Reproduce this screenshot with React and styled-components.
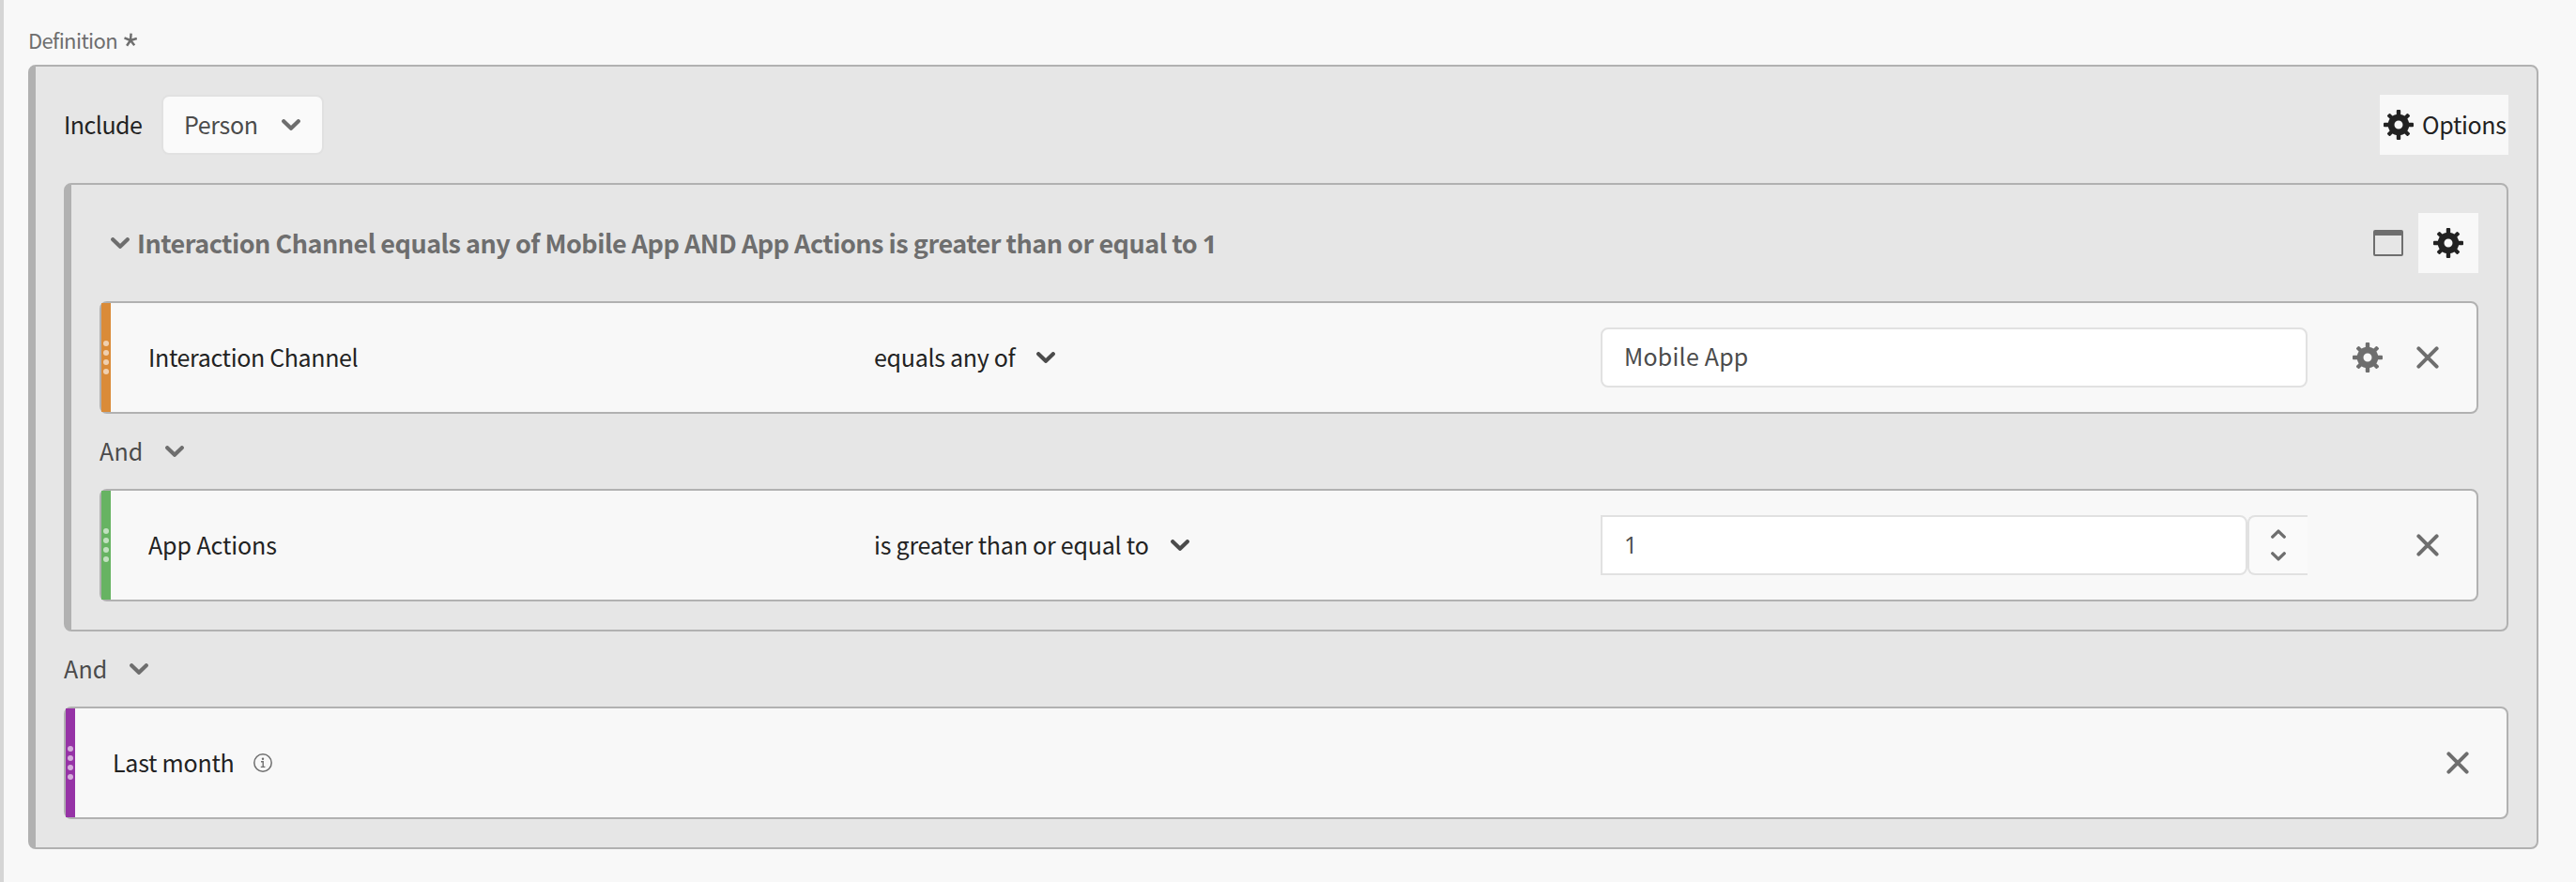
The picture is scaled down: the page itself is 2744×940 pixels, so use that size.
import React from "react";
import styled, { createGlobalStyle } from "styled-components";

const GlobalStyle = createGlobalStyle`
  * { box-sizing: border-box; }
  body {
    margin: 0;
    background: #f8f8f8;
    font-family: "Noto Sans CJK SC", "Open Sans", sans-serif;
  }
  svg { display: block; flex: none; }
`;

const Page = styled.main`
  height: 940px;
  border-left: 4px solid #d5d5d5;
  padding: 18px 40px 0 26px;
`;

const FieldLabel = styled.div`
  display: flex;
  align-items: center;
  gap: 7px;
  height: 51px;
  padding: 0 0 3px 0;
  color: #6e6e6e;
  font-size: 22px;
  line-height: 48px;
  letter-spacing: -0.6px;
`;

const Container = styled.section`
  border: 2px solid #b1b1b1;
  border-left-width: 8px;
  border-radius: 8px;
  background: #e6e6e6;
  padding: 30px;
`;

const OuterContainer = styled(Container)`
  height: 836px;
`;

const ContainerHeader = styled.header`
  display: flex;
  align-items: center;
  height: 64px;
  margin-bottom: 30px;
`;

const Text = styled.span`
  color: ${(p) => p.$color || "#222222"};
  font-size: 25px;
  line-height: 34px;
  padding-bottom: 2px;
  letter-spacing: ${(p) => p.$tracking ?? -0.35}px;
  white-space: nowrap;
`;

const IncludeLabel = styled(Text)`
  width: 104px;
`;

const Picker = styled.button`
  display: flex;
  align-items: center;
  justify-content: space-between;
  width: 173px;
  height: 64px;
  padding: 0 23px 0 22px;
  border: 2px solid #e1e1e1;
  border-radius: 8px;
  background: #fafafa;
  font-family: inherit;
`;

const OptionsButton = styled.button`
  display: flex;
  align-items: center;
  gap: 9px;
  width: 137px;
  height: 64px;
  margin-left: auto;
  padding: 0 0 0 4px;
  border: 0;
  background: #f8f8f8;
  font-family: inherit;
`;

const InnerContainer = styled(Container)`
  height: 478px;
`;

const InnerHeader = styled(ContainerHeader)`
  padding-left: 12px;
`;

const Title = styled.h2`
  margin: 0 auto 0 8px;
  color: #6e6e6e;
  font-size: 27px;
  font-weight: 700;
  line-height: 38px;
  letter-spacing: -0.5px;
  white-space: nowrap;
`;

const Digit = styled.span`
  font-family: "Open Sans", sans-serif;
`;

const SquareButton = styled.button`
  display: grid;
  place-items: center;
  width: 64px;
  height: 64px;
  margin-left: 16px;
  padding: 0;
  border: 0;
  background: #f8f8f8;
`;

const Rule = styled.article`
  display: flex;
  align-items: center;
  height: 120px;
  padding-right: 20px;
  border: 2px solid #b1b1b1;
  border-radius: 8px;
  background: #f8f8f8;
`;

const Handle = styled.div`
  display: flex;
  flex-direction: column;
  align-items: center;
  justify-content: center;
  gap: 4px;
  align-self: stretch;
  width: 10px;
  background: ${(p) => p.$color};
`;

const Dot = styled.i`
  width: 6px;
  height: 6px;
  border-radius: 50%;
  background: rgba(255, 255, 255, 0.6);
`;

const RuleColumns = styled.div`
  display: grid;
  grid-template-columns: 773px 774px 753px;
  align-items: center;
  margin-left: 40px;
`;

const Operator = styled.div`
  display: flex;
  align-items: center;
  gap: 23px;
`;

const Summary = styled.div`
  display: flex;
  align-items: center;
  gap: 21px;
  margin-left: 40px;
`;

const Actions = styled.div`
  display: flex;
  margin-left: auto;
`;

const IconCell = styled.div`
  display: grid;
  place-items: center;
  width: 64px;
  height: 64px;
`;

const Field = styled.div`
  display: flex;
  align-items: center;
  flex: 1;
  height: 64px;
  padding: 0 0 2px 23px;
  border: 2px solid #e1e1e1;
  border-radius: ${(p) => (p.$numeric ? "0 8px 8px 0" : "8px")};
  background: #ffffff;
`;

const NumberField = styled.div`
  display: flex;
`;

const Stepper = styled.div`
  display: flex;
  flex-direction: column;
  align-items: center;
  justify-content: center;
  gap: 14px;
  width: 64px;
  height: 64px;
  border: 2px solid #e1e1e1;
  border-right: 0;
  border-radius: 8px 0 0 8px;
  background: #fafafa;
`;

const Connector = styled.div`
  display: flex;
  align-items: center;
  height: 80px;
`;

const ConnectorLabel = styled(Text)`
  width: 70px;
`;

const Chevron = ({ color = "#6e6e6e" }) => (
  <svg width="20" height="12" viewBox="0 0 20 12" fill="none" stroke={color} strokeWidth="4.2" strokeLinecap="round" strokeLinejoin="round">
    <path d="M2.2 2.2 10 9.8l7.8-7.6" />
  </svg>
);

const StepArrow = ({ up }) => (
  <svg width="16" height="10" viewBox="0 0 16 10" fill="none" stroke="#6e6e6e" strokeWidth="3.4" strokeLinecap="round" strokeLinejoin="round">
    <path d={up ? "M1.8 8.1 8 2.1l6.2 6" : "M1.8 1.9 8 7.9l6.2-6"} />
  </svg>
);

const Cross = () => (
  <svg width="24" height="24" viewBox="0 0 24 24" stroke="#6e6e6e" strokeWidth="4" strokeLinecap="round">
    <path d="M2.4 2.4l19.2 19.2M21.6 2.4 2.4 21.6" />
  </svg>
);

const Gear = ({ color = "#222222" }) => (
  <svg width="32" height="32" viewBox="-16 -16 32 32" fill={color}>
    {[0, 90, 180, 270].map((a) => (
      <rect key={a} x="-2.2" y="-16" width="4.4" height="7" rx="1" transform={`rotate(${a})`} />
    ))}
    {[45, 135, 225, 315].map((a) => (
      <rect key={a} x="-2.1" y="-15.5" width="4.2" height="7" rx="1" transform={`rotate(${a})`} />
    ))}
    <circle r="7.9" fill="none" stroke={color} strokeWidth="6.8" />
  </svg>
);

const WindowIcon = () => (
  <svg width="32" height="28" viewBox="0 0 32 28">
    <rect x="1" y="1" width="30" height="26" rx="1" fill="none" stroke="#6e6e6e" strokeWidth="2" />
    <path d="M1 1h30v5H1z" fill="#6e6e6e" />
  </svg>
);

const InfoIcon = () => (
  <svg width="20" height="20" viewBox="0 0 20 20" fill="none" stroke="#6e6e6e">
    <circle cx="10" cy="10" r="9.2" strokeWidth="1.5" />
    <circle cx="10" cy="5.8" r="1.2" fill="#6e6e6e" stroke="none" />
    <path d="M8 8.7h2.2v5.6M7.8 14.4h4.6" strokeWidth="1.4" />
  </svg>
);

const RequiredIcon = () => (
  <svg width="14" height="15" viewBox="0 0 14 15" stroke="#6e6e6e" strokeWidth="2.5">
    <path d="M7 8 7.6.6M7 8 .5 5.4M7 8l6.8-2M7 8l-3.9 5.7M7 8l4.2 5.3" />
  </svg>
);

const DragHandle = ({ color }) => (
  <Handle $color={color}>
    <Dot /><Dot /><Dot /><Dot />
  </Handle>
);

const And = () => (
  <Connector>
    <ConnectorLabel $color="#4b4b4b" $tracking={0.2}>And</ConnectorLabel>
    <Chevron />
  </Connector>
);

export default function App() {
  return (
    <>
      <GlobalStyle />
      <Page>
        <FieldLabel>
          Definition
          <RequiredIcon />
        </FieldLabel>
        <OuterContainer>
          <ContainerHeader>
            <IncludeLabel $tracking={-0.5}>Include</IncludeLabel>
            <Picker>
              <Text $color="#4b4b4b">Person</Text>
              <Chevron />
            </Picker>
            <OptionsButton>
              <Gear />
              <Text>Options</Text>
            </OptionsButton>
          </ContainerHeader>

          <InnerContainer>
            <InnerHeader>
              <Chevron />
              <Title>
                Interaction Channel equals any of Mobile App AND App Actions is greater than or equal to <Digit>1</Digit>
              </Title>
              <WindowIcon />
              <SquareButton><Gear /></SquareButton>
            </InnerHeader>

            <Rule>
              <DragHandle color="#da8b38" />
              <RuleColumns>
                <Text>Interaction Channel</Text>
                <Operator>
                  <Text $tracking={-0.3}>equals any of</Text>
                  <Chevron color="#4b4b4b" />
                </Operator>
                <Field>
                  <Text $color="#4b4b4b" $tracking={0.2}>Mobile App</Text>
                </Field>
              </RuleColumns>
              <Actions>
                <IconCell><Gear color="#6e6e6e" /></IconCell>
                <IconCell><Cross /></IconCell>
              </Actions>
            </Rule>

            <And />

            <Rule>
              <DragHandle color="#67b362" />
              <RuleColumns>
                <Text $tracking={-0.1}>App Actions</Text>
                <Operator>
                  <Text $tracking={-0.22}>is greater than or equal to</Text>
                  <Chevron color="#4b4b4b" />
                </Operator>
                <NumberField>
                  <Field $numeric>
                    <Text $color="#4b4b4b"><Digit>1</Digit></Text>
                  </Field>
                  <Stepper>
                    <StepArrow up />
                    <StepArrow />
                  </Stepper>
                </NumberField>
              </RuleColumns>
              <Actions>
                <IconCell><Cross /></IconCell>
              </Actions>
            </Rule>
          </InnerContainer>

          <And />

          <Rule>
            <DragHandle color="#9633a6" />
            <Summary>
              <Text $tracking={-0.25}>Last month</Text>
              <InfoIcon />
            </Summary>
            <Actions>
              <IconCell><Cross /></IconCell>
            </Actions>
          </Rule>
        </OuterContainer>
      </Page>
    </>
  );
}
